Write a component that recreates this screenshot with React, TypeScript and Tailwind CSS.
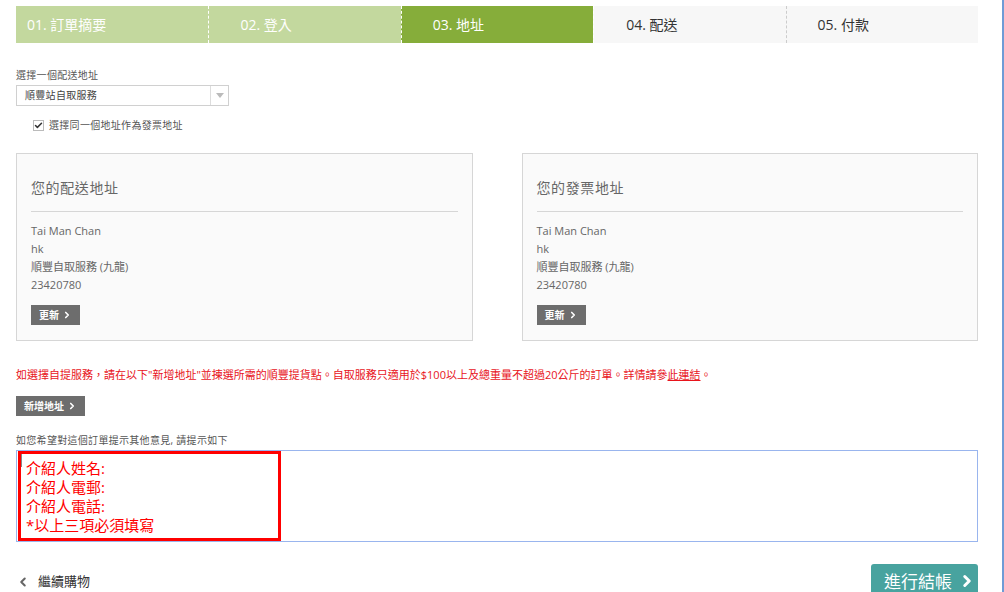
import { Check, ChevronLeft, ChevronRight } from "lucide-react";

const cjk = "font-['Open_Sans','Noto_Sans_CJK_TC',sans-serif]";

const steps = [
  { label: "01. 訂單摘要", state: "done", pad: "pl-[11px]" },
  { label: "02. 登入", state: "done", pad: "pl-[31px]" },
  { label: "03. 地址", state: "active", pad: "pl-[31px]" },
  { label: "04. 配送", state: "todo", pad: "pl-[32px]" },
  { label: "05. 付款", state: "todo", pad: "pl-[31px]" },
];

const address = ["Tai Man Chan", "hk", "順豐自取服務 (九龍)", "23420780"];

function GreyButton({ label }: { label: string }) {
  return (
    <button className="flex h-[20px] items-center gap-[3px] bg-[#6d6d6d] px-[8px] text-[10px] font-bold text-white">
      {label}
      <ChevronRight className="h-[10px] w-[10px]" strokeWidth={4} />
    </button>
  );
}

function AddressCard({ title }: { title: string }) {
  return (
    <div className="border border-[#d6d6d6] bg-[#fafafa] px-[14px] pb-[15px] pt-[24px]">
      <h3 className="text-[14px] leading-[20px] tracking-[0.6px] text-[#666]">{title}</h3>
      <div className="mt-[13px] h-px bg-[#d6d6d6]" />
      <div className="mt-[10px] text-[11px] leading-[18px] text-[#666]">
        {address.map((line) => (
          <p key={line}>{line}</p>
        ))}
      </div>
      <div className="mt-[11px]">
        <GreyButton label="更新" />
      </div>
    </div>
  );
}

export default function App() {
  return (
    <div className={`${cjk} relative h-[592px] w-[1004px] overflow-hidden border-r-2 border-[#6f9bd6] bg-white pl-[16px] pr-[24px] pt-[6px]`}>
      {/* checkout steps */}
      <div className="grid h-[37px] grid-cols-5">
        {steps.map((s, i) => (
          <div
            key={s.label}
            className={[
              "flex items-center text-[14px]",
              s.pad,
              s.state === "done" ? "bg-[#c3d89e] text-white" : "",
              s.state === "active" ? "bg-[#86ad3a] text-white" : "",
              s.state === "todo" ? "bg-[#f7f7f7] text-[#333]" : "",
              i > 0 && s.state !== "todo" ? "border-l border-dashed border-white" : "",
              i > 0 && s.state === "todo" && steps[i - 1].state === "todo" ? "border-l border-dashed border-[#ccc]" : "",
              i > 0 && s.state === "todo" && steps[i - 1].state !== "todo" ? "border-l border-dashed border-white" : "",
            ].join(" ")}
          >
            {s.label}
          </div>
        ))}
      </div>

      <p className="mt-[26px] text-[10px] leading-[12px] tracking-[0.3px] text-[#555]">選擇一個配送地址</p>
      <div className="mt-[4px] flex h-[21px] w-[213px] items-center border border-[#d0d0d0] bg-white">
        <span className="flex-1 pl-[8px] text-[10px] tracking-[0.3px] text-[#444]">順豐站自取服務</span>
        <span className="flex h-full w-[18px] items-center justify-center border-l border-[#ddd]">
          <span className="h-0 w-0 border-x-[4px] border-t-[5px] border-x-transparent border-t-[#bbb]" />
        </span>
      </div>

      <label className="ml-[17px] mt-[12px] flex items-center gap-[5px] text-[10px] tracking-[0.3px] text-[#555]">
        <span className="flex h-[11px] w-[11px] items-center justify-center border border-[#bbb] bg-white">
          <Check className="h-[9px] w-[9px] text-[#333]" strokeWidth={4} />
        </span>
        選擇同一個地址作為發票地址
      </label>

      <div className="mt-[20px] grid grid-cols-2 gap-[49px]">
        <AddressCard title="您的配送地址" />
        <AddressCard title="您的發票地址" />
      </div>

      <p className="mt-[27px] text-[11px] leading-[14px] text-[#e8141c]">
        如選擇自提服務，請在以下"新增地址"並揀選所需的順豐提貨點。自取服務只適用於$100以上及總重量不超過20公斤的訂單。詳情請參<span className="underline">此連結</span>。
      </p>

      <div className="mt-[14px]">
        <GreyButton label="新增地址" />
      </div>

      <p className="mt-[18px] text-[10px] leading-[12px] tracking-[0.3px] text-[#555]">如您希望對這個訂單提示其他意見, 請提示如下</p>

      <div className="relative mt-[4px] h-[92px] border border-[#99b5ee] bg-white">
        <div className="ml-px h-[90px] w-[263px] border-[3px] border-[#ff0000] pl-[5px] pt-[5px] text-[15px] leading-[19px] text-[#ff0000]">
          <p>介紹人姓名:</p>
          <p>介紹人電郵:</p>
          <p>介紹人電話:</p>
          <p>*以上三項必須填寫</p>
        </div>
        <span className="absolute left-[4px] top-[3px] h-[13px] w-px bg-[#888]" />
      </div>

      <div className="mt-[22px] flex items-start justify-between">
        <a className="mt-[8px] flex items-center gap-[8px] text-[13px] text-[#333]">
          <ChevronLeft className="h-[14px] w-[14px] text-[#666]" strokeWidth={3.5} />
          繼續購物
        </a>
        <button className="flex h-[36px] w-[107px] items-start gap-[6px] rounded-t-[3px] bg-[#48a39f] pl-[13px] pt-[5px] text-[17px] text-white">
          進行結帳
          <ChevronRight className="mt-[3px] h-[18px] w-[18px]" strokeWidth={4} />
        </button>
      </div>
    </div>
  );
}
